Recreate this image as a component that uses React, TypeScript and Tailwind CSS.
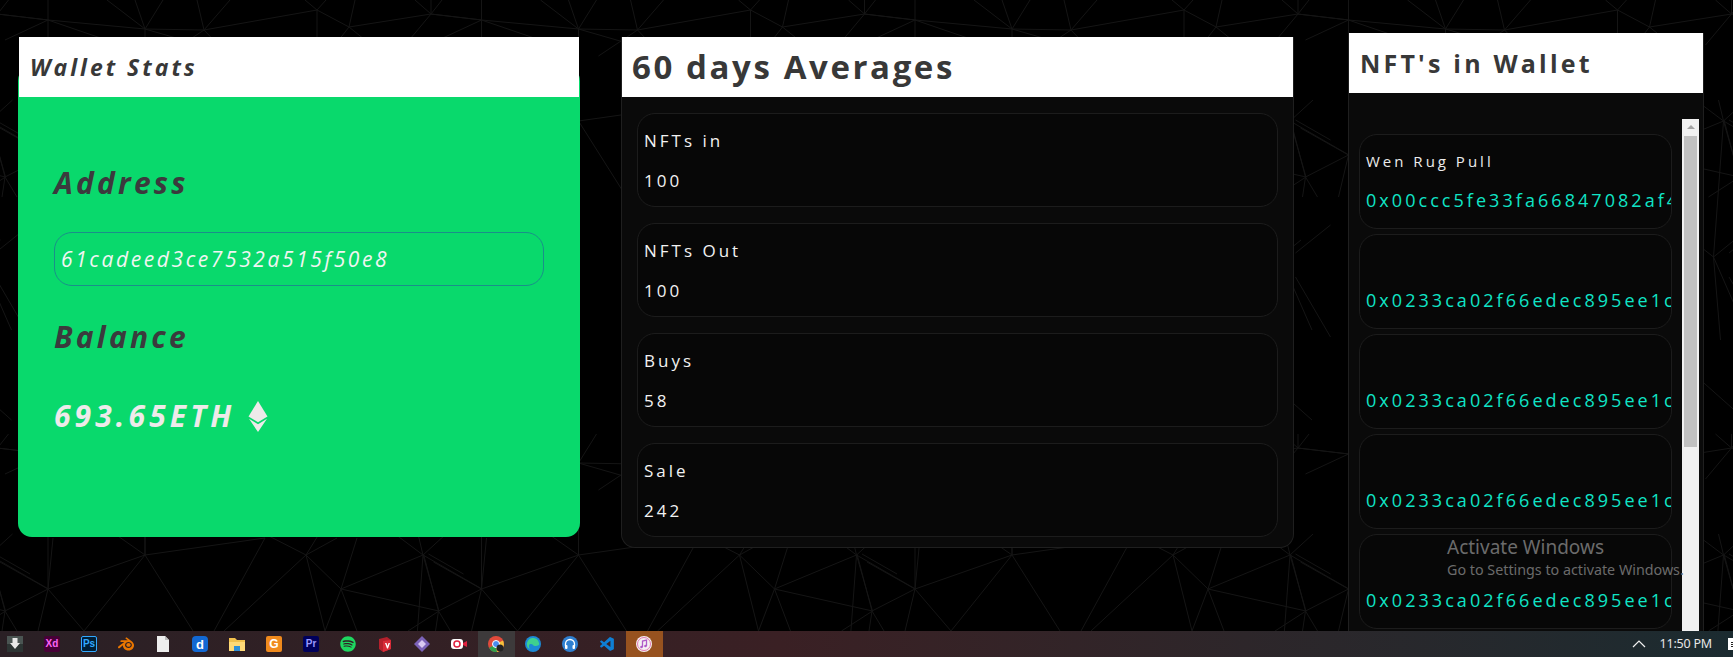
import React from "react";
import { FaSpotify } from "react-icons/fa";
import { SiBlender } from "react-icons/si";
import { VscVscode } from "react-icons/vsc";

const font = "font-['Open_Sans','Noto_Sans',sans-serif]";

type P = [number, number];
const A: P = [48, 20], B: P = [145, 29], C: P = [204, 30], D: P = [317, 10], E: P = [349, 27], F: P = [431, 14];
const G: P = [145, 121], H: P = [306, 121], I: P = [423, 121], J: P = [48, 155], K: P = [341, 155], L: P = [5, 177];
const N: P = [413, 257];
const L2: P = [439, 177], J2: P = [482, 155], F0: P = [-3, 14], A2: P = [482, 20];

const edges: [P, P][] = [
  // upper row of the tile
  [F0, A], [A, B], [B, C], [C, D], [D, E], [E, F], [F, A2],
  [A, [48, -10]], [A, [5, 40]], [A, J], [A, [130, 48]],
  [B, [107, 0]], [B, [135, 0]], [B, [163, 0]], [B, G], [B, [190, 42]],
  [C, [197, 0]], [C, [230, 0]], [C, [165, 56]], [C, [225, 52]],
  [D, [305, 0]], [D, [326, 0]], [D, [317, 60]],
  [E, [355, 0]], [E, [331, 50]], [E, [380, 52]],
  [F, [415, 0]], [F, [431, 0]], [F, [442, 0]], [F, [405, 45]],
  // lower row of the tile
  [G, J], [G, [145, 100]], [G, [115, 100]], [G, [265, 104]], [G, [84, 197]], [G, [193, 197]],
  [[265, 104], [214, 197]], [H, [265, 100]], [H, [319, 100]], [H, [337, 104]], [H, K], [H, [224, 197]], [H, [325, 197]],
  [K, [357, 104]], [K, I], [K, L2], [K, [325, 197]], [K, [357, 197]],
  [I, [395, 100]], [I, [446, 100]], [I, [418, 100]], [I, L2], [I, J2],
  [J, L], [J, [53, 104]], [J, [0, 128]], [J, [38, 197]], [J, [84, 197]],
  [L, [2, 197]], [L, [17, 197]], [L2, [408, 197]],
  // what shows between the panels
  [L, [-10, 120]], [N, I], [N, [434, 240]], [N, [385, 235]], [N, [420, 340]], [N, [445, 330]],
  [[-5, 120], [30, 140]], [[-5, 253], [30, 225]], [[-5, 277], [30, 337]], [[400, 380], [445, 420]],
];

function Mesh() {
  let d = "";
  for (let tx = -1; tx <= 4; tx++) {
    for (let ty = -1; ty <= 1; ty++) {
      for (const [p, q] of edges) {
        d += `M${p[0] + tx * 433.5} ${p[1] + ty * 434}L${q[0] + tx * 433.5} ${q[1] + ty * 434}`;
      }
    }
  }
  return (
    <svg className="absolute inset-0 h-full w-full" viewBox="0 0 1733 657" aria-hidden="true">
      <path d={d} stroke="#151515" strokeWidth="1" fill="none" />
    </svg>
  );
}

function Eth() {
  return (
    <svg width="20" height="31" viewBox="0 0 20 31" className="ml-[13px] shrink-0" aria-hidden="true">
      <path d="M10 0 L19.500 15.500 L10 21.200 L0.500 15.500 Z" fill="#eeeaea" />
      <path d="M10 23.200 L19 17.800 L10 31 L1 17.800 Z" fill="#eeeaea" />
    </svg>
  );
}

function Stat({ label, value }: { label: string; value: string }) {
  return (
    <div className="h-[94px] rounded-[18px] border border-[#1c1c1c] bg-[#070707] pl-[6px] pt-[15px] text-[17px] leading-[24px] tracking-[3px] text-[#f2f2f2]">
      <div>{label}</div>
      <div className="mt-[16px]">{value}</div>
    </div>
  );
}

function Nft({ name, hash }: { name?: string; hash: string }) {
  return (
    <div className="h-[95px] shrink-0 overflow-hidden rounded-[18px] border border-[#1c1c1c] bg-[#070707] pl-[6px] pt-[15px]">
      <div className="h-[22px] text-[15px] font-medium leading-[22px] tracking-[3px] text-[#ececec]">{name}</div>
      <div className="mt-[16px] whitespace-nowrap text-[18px] leading-[25px] tracking-[3.050px] text-[#10e4c6]">{hash}</div>
    </div>
  );
}

const Box = ({ children, className = "" }: { children?: React.ReactNode; className?: string }) => (
  <div className={`flex h-[16px] w-[16px] items-center justify-center rounded-[2px] font-['Liberation_Sans',sans-serif] text-[10px] font-bold leading-none ${className}`}>{children}</div>
);

function Slot({ children, className = "" }: { children: React.ReactNode; className?: string }) {
  return <div className={`flex h-full w-[37px] shrink-0 items-center justify-center ${className}`}>{children}</div>;
}

const Icon = ({ children, w = 16 }: { children: React.ReactNode; w?: number }) => (
  <svg width={w} height="16" viewBox={`0 0 ${w} 16`} aria-hidden="true">{children}</svg>
);

function Taskbar() {
  return (
    <div className="relative z-20 flex h-[26px] shrink-0 items-center bg-gradient-to-r from-[#2a2025] via-[#3a2024] via-45% to-[#1b2b30] pl-0">
      <div className="-ml-[3.500px] flex h-full items-center">
        <Slot><Icon><rect width="16" height="16" fill="#4a5452" /><rect y="8" width="16" height="8" fill="#2c3433" /><path d="M5.500 2h5v5H13l-5 6-5-6h2.500z" fill="#e8e8e8" /></Icon></Slot>
        <Slot><Box className="bg-[#470137] text-[#ff61f6]">Xd</Box></Slot>
        <Slot><Box className="border border-[#31a8ff] bg-[#001e36] text-[#31a8ff]">Ps</Box></Slot>
        <Slot><SiBlender className="text-[#ea7600]" size={16} /></Slot>
        <Slot><Icon w={12}><path d="M0 0h8l4 4v12H0z" fill="#eeeeee" /><path d="M8 0l4 4H8z" fill="#bdbdbd" /></Icon></Slot>
        <Slot><div className="flex h-[16px] w-[16px] items-center justify-center rounded-[4px] bg-[#1268d3] font-['Liberation_Sans',sans-serif] text-[13px] font-bold leading-none text-white">d</div></Slot>
        <Slot><Icon><path d="M0 2h6l2 2h8v11H0z" fill="#f2c14e" /><path d="M0 6h16v9H0z" fill="#ffd977" /><path d="M5 10h6v5H5z" fill="#2f8fd8" /></Icon></Slot>
        <Slot><Box className="bg-[#f08a1d] text-[12px] text-white">G</Box></Slot>
        <Slot><Box className="bg-[#00005b] text-[#9999ff]">Pr</Box></Slot>
        <Slot><FaSpotify className="text-[#1ed760]" size={16} /></Slot>
        <Slot><Icon><path d="M2 3l8-2 4 3v9l-8 3-4-3z" fill="#b5202c" /><path d="M6 5l8-1v9l-8 3z" fill="#d92b38" /><path d="M8 7h1.500l1 3 1-3H13l-2 5.500h-1z" fill="#fff" /></Icon></Slot>
        <Slot><Icon><path d="M8 0l8 8-8 8-8-8z" fill="#7b62b8" /><path d="M8 4l4 4-4 4-4-4z" fill="#d9c9f2" /></Icon></Slot>
        <Slot><Icon><rect x="0" y="3" width="12" height="10" rx="3" fill="#fff" /><circle cx="6" cy="8" r="3" fill="none" stroke="#e0223f" strokeWidth="1.500" /><path d="M12 7l4-2v6l-4-2z" fill="#e0223f" /></Icon></Slot>
        <Slot className="bg-[#3d3a3b]"><Icon><circle cx="8" cy="8" r="8" fill="#e04a3b" /><path d="M8 8L1 12a8 8 0 0 0 8 4z" fill="#2fa04c" /><path d="M8 8l7-3.500A8 8 0 0 1 9 16z" fill="#f6c23c" /><circle cx="8" cy="8" r="3.500" fill="#4a8cf0" stroke="#fff" /><circle cx="12" cy="12" r="3.500" fill="#222" /></Icon></Slot>
        <Slot><Icon><circle cx="8" cy="8" r="8" fill="#1c8ad6" /><path d="M2 9a6 6 0 0 1 12-2c1 2-1 3-4 3-2 0-2-2-4-2s-3 2-1 5c-2-1-3-2-3-4z" fill="#3fd18f" /></Icon></Slot>
        <Slot><Icon><circle cx="8" cy="8" r="8" fill="#2f7fd0" /><path d="M3.500 10V8a4.500 4.500 0 0 1 9 0v2" fill="none" stroke="#fff" strokeWidth="1.300" /><rect x="3" y="9" width="2.500" height="4" rx="1" fill="#fff" /><rect x="10.500" y="9" width="2.500" height="4" rx="1" fill="#fff" /></Icon></Slot>
        <Slot><VscVscode className="text-[#0f7fd4]" size={17} /></Slot>
        <Slot className="bg-[#97521f]"><Icon><circle cx="8" cy="8" r="8" fill="#f5f0f2" /><circle cx="8" cy="8" r="6.500" fill="none" stroke="#e27ab5" strokeWidth="1" /><path d="M6.500 11V5l4-1v6" fill="none" stroke="#b05ac8" strokeWidth="1.300" /><circle cx="5.500" cy="11" r="1.300" fill="#b05ac8" /><circle cx="9.500" cy="10" r="1.300" fill="#b05ac8" /></Icon></Slot>
      </div>
      <div className="ml-auto flex h-full items-center text-white">
        <svg width="14" height="8" viewBox="0 0 14 8" aria-hidden="true"><path d="M1 7l6-6 6 6" fill="none" stroke="#f2f2f2" strokeWidth="1.200" /></svg>
        <span className="ml-[13px] whitespace-nowrap font-['Noto_Sans',sans-serif] text-[12.500px] tracking-[-0.2px] text-[#e8e8e8]">11:50 PM</span>
        <div className="ml-[16px] mr-[-5px] flex h-[12px] w-[10px] flex-col justify-center gap-[1px] bg-white pl-[3px]">
          <i className="block h-px w-[4px] bg-[#222]" /><i className="block h-px w-[4px] bg-[#222]" /><i className="block h-px w-[4px] bg-[#222]" />
        </div>
      </div>
    </div>
  );
}

export default function App() {
  return (
    <div className={`relative flex h-[657px] w-[1733px] flex-col overflow-hidden bg-black ${font}`}>
      <Mesh />
      <main className="relative flex min-h-0 flex-1 items-start pl-[18px]">
        {/* Wallet Stats */}
        <section className="mt-[37px] w-[562px]">
          <div className="relative z-10 mx-px -mb-[30px] flex h-[60px] items-center pl-[11px] text-[23px] font-bold italic tracking-[3px] text-[#383838] bg-white">
            Wallet Stats
          </div>
          <div className="h-[470px] rounded-[14px] bg-[#09d96c] pl-[36px] pr-[36px] pt-[96px]">
            <h2 className="text-[30px] font-bold italic leading-[40px] tracking-[3.200px] text-[#3b3a3d]">Address</h2>
            <div className="mt-[29px] flex h-[54px] items-center rounded-[18px] border border-[#1a8f8a] pl-[6px] pt-[2px] text-[21px] italic tracking-[2.600px] text-[#f1f5f2]">
              61cadeed3ce7532a515f50e8
            </div>
            <h2 className="mt-[31px] text-[30px] font-bold italic leading-[40px] tracking-[3.200px] text-[#3b3a3d]">Balance</h2>
            <div className="mt-[39px] flex items-center">
              <span className="text-[30px] font-bold italic leading-[40px] tracking-[4.100px] text-[#eeeaea]">693.65ETH</span>
              <Eth />
            </div>
          </div>
        </section>

        {/* Averages */}
        <section className="ml-[41px] mt-[37px] h-[511px] w-[673px] rounded-b-[14px] border-x border-b border-[#1f1f1f] bg-[#0a0a0a]">
          <div className="flex h-[60px] items-center pl-[10px] text-[33px] font-bold tracking-[2.600px] text-[#383838] bg-white">
            60 days Averages
          </div>
          <div className="flex flex-col gap-[16px] pl-[15px] pr-[15px] pt-[16px]">
            <Stat label="NFTs in" value="100" />
            <Stat label="NFTs Out" value="100" />
            <Stat label="Buys" value="58" />
            <Stat label="Sale" value="242" />
          </div>
        </section>

        {/* NFTs */}
        <section className="ml-[54px] mt-[33px] flex h-[598px] w-[356px] flex-col border-x border-[#1f1f1f] bg-[#0a0a0a]">
          <div className="flex h-[60px] shrink-0 items-center pl-[11px] pt-[2px] text-[25px] font-bold tracking-[3.200px] text-[#383838] bg-white">
            NFT's in Wallet
          </div>
          <div className="mt-[26px] flex min-h-0 flex-1 pl-[10px] pr-[4px]">
            <div className="flex min-w-0 flex-1 flex-col gap-[5px] overflow-hidden pr-[10px] pt-[15px]">
              <Nft name="Wen Rug Pull" hash="0x00ccc5fe33fa66847082af4" />
              <Nft hash="0x0233ca02f66edec895ee1c" />
              <Nft hash="0x0233ca02f66edec895ee1c" />
              <Nft hash="0x0233ca02f66edec895ee1c" />
              <Nft hash="0x0233ca02f66edec895ee1c" />
            </div>
            <div className="flex w-[17px] shrink-0 flex-col items-center bg-[#f1f1f1]">
              <div className="mt-[6px] h-0 w-0 border-x-[4px] border-b-[4px] border-x-transparent border-b-[#a3a3a3]" />
              <div className="mt-[7px] h-[311px] w-[13px] bg-[#c1c1c1]" />
            </div>
          </div>
        </section>

        {/* Windows watermark */}
        <div className="pointer-events-none absolute left-[1447px] top-[534px] z-10 whitespace-nowrap font-['Noto_Sans',sans-serif] text-[#6b6b6b]">
          <div className="text-[19px] leading-[26px]">Activate Windows</div>
          <div className="text-[14.300px] leading-[20px]">Go to Settings to activate Windows.</div>
        </div>
      </main>
      <Taskbar />
    </div>
  );
}
